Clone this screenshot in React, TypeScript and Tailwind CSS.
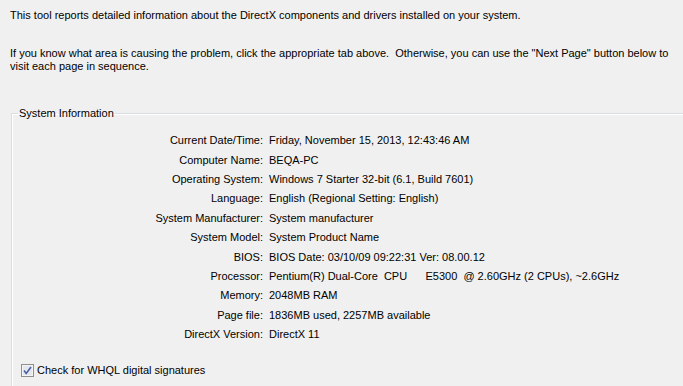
const rows: [string, string][] = [
  ['Current Date/Time:', 'Friday, November 15, 2013, 12:43:46 AM'],
  ['Computer Name:', 'BEQA-PC'],
  ['Operating System:', 'Windows 7 Starter 32-bit (6.1, Build 7601)'],
  ['Language:', 'English (Regional Setting: English)'],
  ['System Manufacturer:', 'System manufacturer'],
  ['System Model:', 'System Product Name'],
  ['BIOS:', 'BIOS Date: 03/10/09 09:22:31 Ver: 08.00.12'],
  ['Processor:', 'Pentium(R) Dual-Core  CPU      E5300  @ 2.60GHz (2 CPUs), ~2.6GHz'],
  ['Memory:', '2048MB RAM'],
  ['Page file:', '1836MB used, 2257MB available'],
  ['DirectX Version:', 'DirectX 11'],
]

function CheckBox() {
  return (
    <svg width="13" height="13" viewBox="0 0 13 13" className="shrink-0">
      <rect x="0.5" y="0.5" width="12" height="12" fill="#f4f4f4" stroke="#8f8f8f" />
      <rect x="2" y="2" width="9" height="9" fill="#e4e8ee" />
      <path d="M3 6.5 L5.2 9.5 L10 3" fill="none" stroke="#4a5fa6" strokeWidth="1.6" />
    </svg>
  )
}

export default function App() {
  return (
    <div
      className="w-[683px] h-[386px] overflow-hidden bg-[#f0f0f0] text-[11px] leading-[13px] text-black"
      style={{ fontFamily: '"Liberation Sans", Arial, sans-serif' }}
    >
      <div className="pl-[10px] pt-[9px]">
        <p>This tool reports detailed information about the DirectX components and drivers installed on your system.</p>
        <p className="mt-[25px] whitespace-pre">
          If you know what area is causing the problem, click the appropriate tab above.  Otherwise, you can use the "Next Page" button below to
        </p>
        <p>visit each page in sequence.</p>
      </div>

      <fieldset className="ml-[11px] mt-[34px] w-[700px] border-t border-l border-[#d5dfe5] shadow-[inset_1px_1px_0_#ffffff] pb-4">
        <legend className="ml-[6px] px-[1px] leading-[13px]">System Information</legend>
        <div className="mt-[11px]">
          {rows.map(([label, value]) => (
            <div key={label} className="flex h-[19.4px] items-center">
              <span className="w-[251px] text-right">{label}</span>
              <span className="ml-[6px] whitespace-pre">{value}</span>
            </div>
          ))}
        </div>
        <label className="mt-[20px] ml-[9px] flex items-center gap-[3px]">
          <CheckBox />
          <span>Check for WHQL digital signatures</span>
        </label>
      </fieldset>
    </div>
  )
}
